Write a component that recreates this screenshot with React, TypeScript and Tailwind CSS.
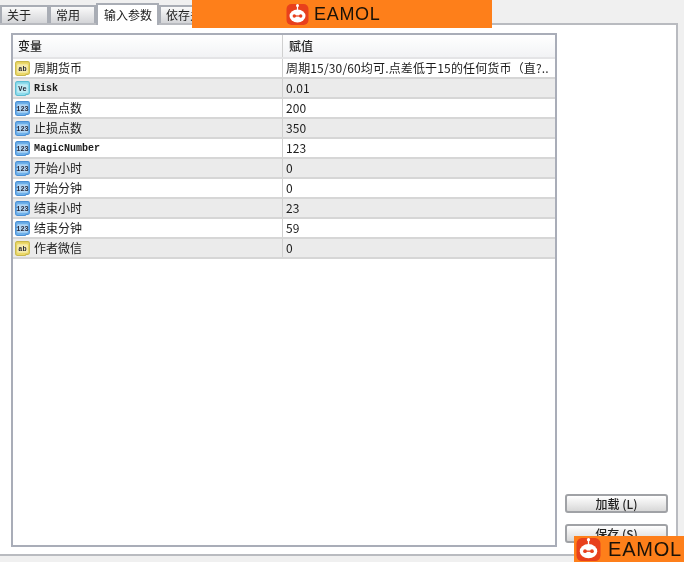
const rows = [
  { kind: "ab", name: "周期货币", value: "周期15/30/60均可.点差低于15的任何货币（直?.." },
  { kind: "ve", name: "Risk", value: "0.01", mono: true },
  { kind: "int", name: "止盈点数", value: "200" },
  { kind: "int", name: "止损点数", value: "350" },
  { kind: "int", name: "MagicNumber", value: "123", mono: true },
  { kind: "int", name: "开始小时", value: "0" },
  { kind: "int", name: "开始分钟", value: "0" },
  { kind: "int", name: "结束小时", value: "23" },
  { kind: "int", name: "结束分钟", value: "59" },
  { kind: "ab", name: "作者微信", value: "0" },
];

function TypeIcon({ kind }: { kind: string }) {
  const fill = kind === "ab" ? "#ecd96a" : kind === "ve" ? "#8fdcec" : "#6fb1ea";
  const stroke = kind === "ab" ? "#c9b84a" : kind === "ve" ? "#5cbcd2" : "#4a90d6";
  const label = kind === "ab" ? "ab" : kind === "ve" ? "Ve" : "123";
  return (
    <svg width="17" height="17" viewBox="0 0 16 16" className="shrink-0">
      <path
        d="M3 1.5h10a1.5 1.5 0 0 1 1.5 1.5v9a1.5 1.5 0 0 1-1.5 1.5h-1.5l-1 1H3.5a2 2 0 0 1-2-2V3A1.5 1.5 0 0 1 3 1.5z"
        fill={fill}
        stroke={stroke}
      />
      <rect x="3" y="4" width="10" height="8" rx="1" fill="#ffffff" fillOpacity="0.45" />
      <text x="8" y="10.5" textAnchor="middle" fontSize="6.5" fontWeight="700" fill="#2b2b3a" fontFamily="'Liberation Mono', monospace">
        {label}
      </text>
    </svg>
  );
}

function Watermark({ small }: { small?: boolean }) {
  return (
    <div className={`flex items-center ${small ? "gap-[7px]" : "gap-[5px]"}`}>
      <svg width={small ? 25 : 23} height={small ? 24 : 22} viewBox="0 0 22 22" className="shrink-0">
        <rect x="0" y="1" width="22" height="21" rx="5" fill="#e8401c" />
        <circle cx="11" cy="2.5" r="1.5" fill="#ffffff" />
        <rect x="10.4" y="3" width="1.2" height="4" fill="#ffffff" />
        <ellipse cx="11" cy="13" rx="8" ry="6.5" fill="#ffffff" />
        <circle cx="7.8" cy="13" r="1.7" fill="#e8401c" />
        <circle cx="14.2" cy="13" r="1.7" fill="#e8401c" />
        <rect x="8" y="12.4" width="6" height="1.2" fill="#e8401c" />
      </svg>
      <span
        className={`font-['Liberation_Sans',sans-serif] leading-none text-[#1a1208] ${
          small ? "text-[20px] tracking-[0.8px]" : "text-[18px] tracking-[0.7px]"
        }`}
      >
        EAMOL
      </span>
    </div>
  );
}

function Tab({ label, active, w }: { label: string; active?: boolean; w: string }) {
  return (
    <div
      className={`${w} flex items-center border-2 border-b-0 border-[#a9adb5] text-[12px] text-[#222] ${
        active ? "relative z-10 -mb-[2px] h-[22px] bg-white pl-[6px]" : "h-[18px] bg-linear-to-b from-[#fafafa] to-[#d4d5d8] pl-[5px]"
      }`}
    >
      {label}
    </div>
  );
}

export default function App() {
  return (
    <div className="relative h-[562px] w-[684px] overflow-hidden bg-[#f0f0f0] font-['Noto_Sans_CJK_SC',sans-serif] blur-[0.5px]">
      {/* tab strip */}
      <div className="flex h-[23px] items-end">
        <Tab label="关于" w="w-[49px]" />
        <Tab label="常用" w="w-[47px]" />
        <Tab label="输入参数" active w="w-[63px]" />
        <Tab label="依存关系" w="w-[60px]" />
      </div>

      {/* tab page */}
      <div className="flex h-[533px] w-[678px] gap-[8px] border-t-2 border-r-2 border-b-2 border-[#b9bbc0] bg-white pt-[8px] pl-[11px]">
        <div className="flex h-[514px] w-[546px] flex-col border-2 border-[#a9adb8] bg-white">
          <div className="flex h-[24px] shrink-0 border-b-2 border-[#e4e4e6] bg-linear-to-b from-white to-[#f2f3f5] text-[12px] font-medium text-[#222]">
            <div className="flex w-[270px] items-center border-r border-[#d0d0d0] pl-[5px]">变量</div>
            <div className="flex flex-1 items-center pl-[6px]">赋值</div>
          </div>
          {rows.map((row, i) => (
            <div
              key={row.name}
              className={`flex h-[20px] shrink-0 border-b-2 border-[#d6d6d6] text-[12px] text-[#1c1c1c] ${i % 2 === 1 ? "bg-[#ebebeb]" : "bg-white"}`}
            >
              <div className="flex w-[270px] items-center gap-[3px] border-r border-[#d0d0d0] pl-[1px]">
                <TypeIcon kind={row.kind} />
                <span className={row.mono ? "font-['Liberation_Mono',monospace] text-[10px] font-bold" : ""}>{row.name}</span>
              </div>
              <div className="flex-1 truncate pl-[3px] leading-[18px] tracking-[0.15px]">{row.value}</div>
            </div>
          ))}
        </div>

        <div className="flex w-[103px] flex-col gap-[11px] pt-[461px]">
          <button className="h-[19px] rounded-[3px] border-2 border-[#a0a2a6] bg-linear-to-b from-white to-[#d8d8d8] text-[12px] leading-none font-medium text-[#222]">
            加载 (L)
          </button>
          <button className="h-[19px] rounded-[3px] border-2 border-[#a0a2a6] bg-linear-to-b from-white to-[#d8d8d8] text-[12px] leading-none font-medium text-[#222]">
            保存 (S)
          </button>
        </div>
      </div>

      {/* watermarks */}
      <div className="absolute top-0 left-[192px] flex h-[28px] w-[300px] items-center bg-[#fe7f1a] pl-[94px]">
        <Watermark />
      </div>
      <div className="absolute top-[536px] left-[574px] flex h-[26px] w-[110px] items-center bg-[#fe7f1a] pl-[2px]">
        <Watermark small />
      </div>
    </div>
  );
}
